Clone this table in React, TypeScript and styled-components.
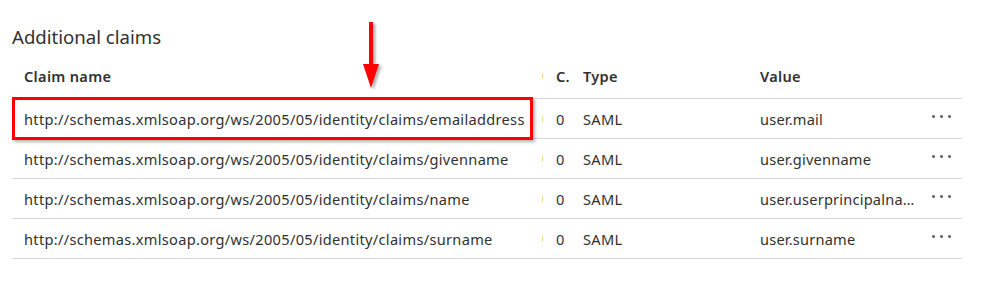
import styled, {createGlobalStyle} from 'styled-components'

const GlobalStyle = createGlobalStyle`
  html, body {
    margin: 0;
    padding: 0;
    background: #ffffff;
  }
  body {
    font-family: "Noto Sans", "Liberation Sans", Arial, sans-serif;
    color: #323130;
  }
`

type Claim = {
  name: string
  format: string
  type: string
  value: string
}

const claims: Claim[] = [
  {
    name: 'http://schemas.xmlsoap.org/ws/2005/05/identity/claims/emailaddress',
    format: '0',
    type: 'SAML',
    value: 'user.mail',
  },
  {
    name: 'http://schemas.xmlsoap.org/ws/2005/05/identity/claims/givenname',
    format: '0',
    type: 'SAML',
    value: 'user.givenname',
  },
  {
    name: 'http://schemas.xmlsoap.org/ws/2005/05/identity/claims/name',
    format: '0',
    type: 'SAML',
    value: 'user.userprincipalname',
  },
  {
    name: 'http://schemas.xmlsoap.org/ws/2005/05/identity/claims/surname',
    format: '0',
    type: 'SAML',
    value: 'user.surname',
  },
]

const Page = styled.div`
  position: relative;
  width: 1001px;
  height: 286px;
  padding: 23px 0 0 12px;
  box-sizing: border-box;
`

const Title = styled.h2`
  margin: 0;
  font-size: 18.6px;
  font-weight: 400;
  line-height: 28px;
  color: #323130;
`

const Table = styled.div`
  position: relative;
  width: 950px;
  margin-top: 6px;
  font-size: 14.6px;
  letter-spacing: 0.3px;
`

const Row = styled.div<{$header?: boolean}>`
  display: grid;
  grid-template-columns: 530px 41px 177px 156px 1fr;
  align-items: center;
  height: ${(p) => (p.$header ? '42px' : '40px')};
  box-sizing: border-box;
  border-bottom: 1px solid #d8d8d8;
  font-weight: ${(p) => (p.$header ? 600 : 400)};
  padding-bottom: ${(p) => (p.$header ? '3px' : '0')};
`

const Cell = styled.div`
  white-space: nowrap;
  overflow: hidden;
  text-overflow: ellipsis;
`

const NameCell = styled(Cell)`
  padding-left: 12px;
`

const FormatCell = styled.div`
  display: flex;
  align-items: center;
  gap: 13px;
`

const Grip = styled.span`
  width: 1px;
  height: 6px;
  background: #f5d98a;
`

const ValueCell = styled(Cell)`
  letter-spacing: 0.2px;
`

const More = styled.div`
  display: flex;
  gap: 5px;
  padding-left: 16px;
  margin-top: -5px;
`

const Dot = styled.span`
  width: 3px;
  height: 3px;
  border-radius: 50%;
  background: #605e5c;
`

const Highlight = styled.div`
  position: absolute;
  left: 0;
  top: 40px;
  width: 521px;
  height: 43px;
  box-sizing: border-box;
  border: 3.5px solid #ff0000;
  box-shadow: 2px 2px 3px rgba(0, 0, 0, 0.3);
  pointer-events: none;
`

const Arrow = styled.svg`
  position: absolute;
  left: 360px;
  top: 20px;
  overflow: visible;
`

function DotsButton() {
  return (
    <More>
      <Dot />
      <Dot />
      <Dot />
    </More>
  )
}

export default function App() {
  return (
    <>
      <GlobalStyle />
      <Page>
        <Title>Additional claims</Title>
        <Table>
          <Row $header>
            <NameCell>Claim name</NameCell>
            <FormatCell>
              <Grip />
              <span>C.</span>
            </FormatCell>
            <Cell>Type</Cell>
            <Cell>Value</Cell>
            <span />
          </Row>
          {claims.map((c) => (
            <Row key={c.name}>
              <NameCell>{c.name}</NameCell>
              <FormatCell>
                <Grip />
                <span>{c.format}</span>
              </FormatCell>
              <Cell>{c.type}</Cell>
              <ValueCell title={c.value}>{c.value}</ValueCell>
              <DotsButton />
            </Row>
          ))}
          <Highlight />
        </Table>
        <Arrow width="24" height="72" viewBox="0 0 24 72">
          <defs>
            <filter id="arrowShadow" x="-50%" y="-20%" width="200%" height="140%">
              <feDropShadow dx="2.5" dy="2" stdDeviation="1.2" floodColor="#000" floodOpacity="0.3" />
            </filter>
          </defs>
          <g filter="url(#arrowShadow)">
            <rect x="9" y="2" width="4" height="44" fill="#ff0000" />
            <polygon points="3,44 19,44 11,68" fill="#ff0000" />
          </g>
        </Arrow>
      </Page>
    </>
  )
}
